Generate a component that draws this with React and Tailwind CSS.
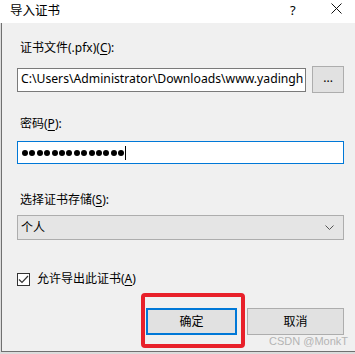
import React from "react"

const font = { fontFamily: '"Noto Sans", "Noto Sans CJK SC", sans-serif' }

const Acc = ({ children }) => <span className="underline underline-offset-2">{children}</span>

export default function App() {
  return (
    <div className="w-[355px] h-[354px] bg-[#dcdcdc] text-[12px] text-black overflow-hidden" style={font}>
      {/* title bar */}
      <div className="h-[23px] bg-white flex items-center pl-[10px] relative">
        <span className="text-[12.5px] leading-none">导入证书</span>
        <span className="absolute left-[290px] top-[4px] text-[13px] leading-none">?</span>
        <svg className="absolute left-[331px] top-[3px]" width="11" height="11" viewBox="0 0 11 11">
          <path d="M0.5 0.5 L10.5 10.5 M10.5 0.5 L0.5 10.5" stroke="#111" strokeWidth="1" fill="none" />
        </svg>
      </div>

      {/* body */}
      <div className="h-[329px] ml-[1px] border-l border-b border-[#707070] bg-[#f0f0f0] relative pt-[17px] pl-[15px] pr-[11px]">
        <div className="leading-[16px] pl-[3px]">
          证书文件(.pfx)(<Acc>C</Acc>):
        </div>
        <div className="flex items-center gap-[6px] mt-[10px]">
          <div className="w-[290px] h-[24px] border border-[#7a7a7a] bg-white flex items-center pl-[3px] overflow-hidden whitespace-nowrap text-[12.2px]">
            C:\Users\Administrator\Downloads\www.yadingh
          </div>
          <div className="w-[32px] h-[27px] border border-[#adadad] bg-[#e1e1e1] flex items-center justify-center text-[12px] pb-[4px]">
            ...
          </div>
        </div>

        <div className="leading-[16px] pl-[3px] mt-[23px]">
          密码(<Acc>P</Acc>):
        </div>
        <div className="mt-[9px] w-[327px] h-[23px] border border-[#0078d7] bg-white flex items-center pl-[4px]">
          <div className="flex gap-[1.4px]">
            {Array.from({ length: 14 }).map((_, i) => (
              <span key={i} className="w-[6px] h-[6px] rounded-full bg-black" />
            ))}
          </div>
          <span className="ml-[1px] w-[1px] h-[14px] bg-black" />
        </div>

        <div className="leading-[16px] pl-[3px] mt-[28px]">
          选择证书存储(<Acc>S</Acc>):
        </div>
        <div className="mt-[7px] w-[327px] h-[25px] border border-[#adadad] bg-[#e5e5e5] flex items-center justify-between pl-[3px] pr-[9px]">
          <span>个人</span>
          <svg width="9" height="5" viewBox="0 0 9 5">
            <path d="M0.5 0.5 L4.5 4.5 L8.5 0.5" stroke="#555" strokeWidth="1" fill="none" />
          </svg>
        </div>

        <div className="flex items-center mt-[31px] gap-[7px]">
          <div className="w-[13px] h-[13px] border border-[#333] bg-white flex items-center justify-center">
            <svg width="11" height="9" viewBox="0 0 11 9">
              <path d="M1 4.5 L4 7.5 L10 1" stroke="#333" strokeWidth="1.2" fill="none" />
            </svg>
          </div>
          <span className="leading-[16px]">允许导出此证书(<Acc>A</Acc>)</span>
        </div>

        <div className="flex justify-end gap-[10px] mt-[21px]">
          <div className="w-[91px] h-[27px] border-2 border-[#0078d7] bg-[#e1e1e1] flex items-center justify-center">
            确定
          </div>
          <div className="w-[97px] h-[27px] border border-[#adadad] bg-[#e1e1e1] flex items-center justify-center">
            取消
          </div>
        </div>

        {/* annotation overlay */}
        <div className="absolute left-[139px] top-[270px] w-[104px] h-[55px] border-[4px] border-[#e8202a] rounded-[4px]" />
        <div className="absolute left-[267px] top-[311px] text-[11px] leading-[14px] text-[#b4b4b4]" style={{ fontFamily: '"Liberation Sans", sans-serif' }}>
          CSDN @MonkT
        </div>
      </div>
    </div>
  )
}
